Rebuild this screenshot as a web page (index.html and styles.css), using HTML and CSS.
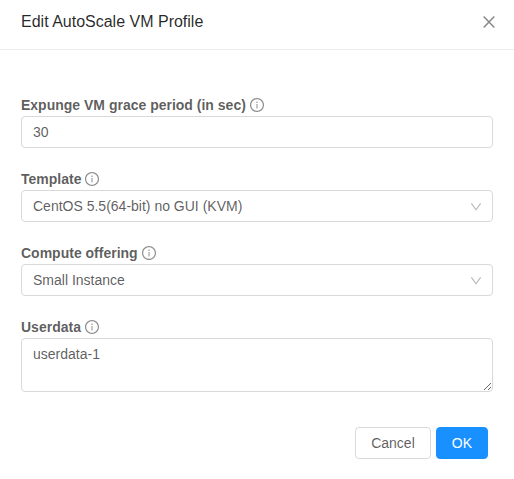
FILE: index.html
```html
<!DOCTYPE html>
<html lang="en">
<head>
<meta charset="utf-8">
<title>Edit AutoScale VM Profile</title>
<link rel="stylesheet" href="styles.css">
</head>
<body>
<svg class="defs" width="0" height="0" aria-hidden="true">
  <symbol id="info" viewBox="64 64 896 896"><path d="M512 64C264.600 64 64 264.600 64 512s200.600 448 448 448 448-200.600 448-448S759.400 64 512 64zm0 820c-205.400 0-372-166.600-372-372s166.600-372 372-372 372 166.600 372 372-166.600 372-372 372z"/><path d="M464 336a48 48 0 1 0 96 0 48 48 0 1 0-96 0zm72 112h-48c-4.400 0-8 3.600-8 8v272c0 4.400 3.600 8 8 8h48c4.400 0 8-3.600 8-8V456c0-4.400-3.600-8-8-8z"/></symbol>
  <symbol id="down" viewBox="0 0 12 12"><path d="M1.400 2.300 6 8.800 10.600 2.300"/></symbol>
</svg>
<main class="modal">
  <header class="header">
    <h1 class="title">Edit AutoScale VM Profile</h1>
    <svg class="close" viewBox="0 0 16 16"><path d="M2.700 2.400 13.300 13.600M13.300 2.400 2.700 13.600"/></svg>
  </header>
  <form class="form">
    <div class="field">
      <label class="label" for="grace">Expunge VM grace period (in sec)<svg class="info"><use href="#info"/></svg></label>
      <input class="control" id="grace" value="30">
    </div>
    <div class="field">
      <div class="label">Template<svg class="info"><use href="#info"/></svg></div>
      <div class="control select"><span>CentOS 5.5(64-bit) no GUI (KVM)</span><svg class="arrow"><use href="#down"/></svg></div>
    </div>
    <div class="field">
      <div class="label">Compute offering<svg class="info"><use href="#info"/></svg></div>
      <div class="control select"><span>Small Instance</span><svg class="arrow"><use href="#down"/></svg></div>
    </div>
    <div class="field">
      <label class="label" for="userdata">Userdata<svg class="info"><use href="#info"/></svg></label>
      <textarea class="control textarea" id="userdata">userdata-1</textarea>
    </div>
    <div class="actions">
      <button class="button" type="button">Cancel</button>
      <button class="button primary" type="button">OK</button>
    </div>
  </form>
</main>
</body>
</html>
```
FILE: styles.css
```css
* { box-sizing: border-box; }
body {
  margin: 0;
  background: #fff;
  color: rgba(0, 0, 0, .65);
  font: 14px/21px "Liberation Sans", Arial, sans-serif;
}
.defs { position: absolute; }
.header {
  display: flex;
  align-items: flex-start;
  justify-content: space-between;
  height: 50px;
  padding: 11px 17px 0 21px;
  border-bottom: 1px solid #ececec;
}
.title {
  margin: 0;
  color: rgba(0, 0, 0, .85);
  font-size: 16px;
  font-weight: 500;
  line-height: 22px;
}
.close {
  width: 16px;
  height: 16px;
  margin-top: 3px;
  fill: none;
  stroke: rgba(0, 0, 0, .47);
  stroke-width: 1.5;
}
.form { padding: 44px 21px 0; }
.field { margin-bottom: 20px; }
.label {
  display: flex;
  align-items: center;
  gap: 4px;
  height: 22px;
  font-weight: 700;
}
.info {
  width: 14px;
  height: 14px;
  fill: rgba(0, 0, 0, .45);
}
.control {
  display: block;
  width: 100%;
  height: 32px;
  padding: 4px 11px;
  border: 1px solid #d9d9d9;
  border-radius: 4px;
  background: #fff;
  color: rgba(0, 0, 0, .65);
  font: inherit;
}
.select {
  display: flex;
  align-items: center;
  justify-content: space-between;
  padding-right: 10px;
}
.arrow {
  width: 12px;
  height: 12px;
  margin-top: 2px;
  fill: none;
  stroke: rgba(0, 0, 0, .27);
  stroke-width: 1.2;
}
.textarea {
  height: 54px;
  padding-top: 5px;
  resize: vertical;
  overflow: auto;
}
.actions {
  display: flex;
  justify-content: flex-end;
  gap: 5px;
  margin-top: 35px;
  padding-right: 5px;
}
.button {
  height: 32px;
  padding: 0 15px;
  border: 1px solid #d9d9d9;
  border-radius: 4px;
  background: #fff;
  color: rgba(0, 0, 0, .65);
  font: inherit;
}
.primary {
  border-color: #1890ff;
  background: #1890ff;
  color: #fff;
}
```
